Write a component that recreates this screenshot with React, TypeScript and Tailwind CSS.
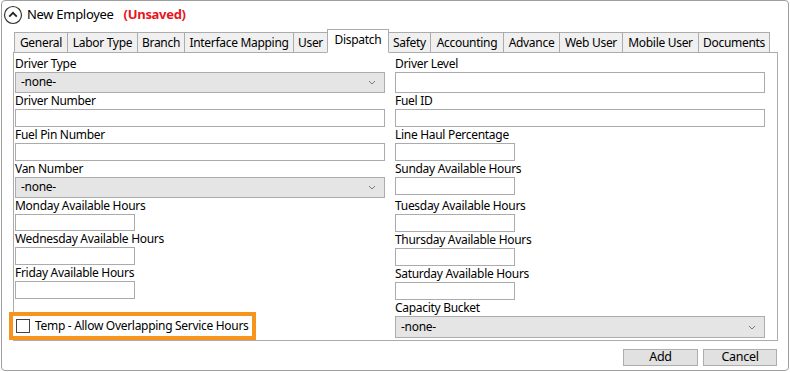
import React from "react";

const tabs: { name: string; w: string }[] = [
  { name: "General", w: "w-[54px]" },
  { name: "Labor Type", w: "w-[71px]" },
  { name: "Branch", w: "w-[48px]" },
  { name: "Interface Mapping", w: "w-[110px]" },
  { name: "User", w: "w-[35px]" },
  { name: "Dispatch", w: "w-[62px]" },
  { name: "Safety", w: "w-[43px]" },
  { name: "Accounting", w: "w-[74px]" },
  { name: "Advance", w: "w-[57px]" },
  { name: "Web User", w: "w-[64px]" },
  { name: "Mobile User", w: "w-[77px]" },
  { name: "Documents", w: "w-[72px]" },
];

function Label({ children, className = "" }: { children: React.ReactNode; className?: string }) {
  return <div className={`h-[16px] leading-[16px] whitespace-nowrap ${className}`}>{children}</div>;
}

function TextBox({ wide, tall }: { wide?: boolean; tall?: boolean }) {
  return (
    <div
      className={`${wide ? "w-[370px]" : "w-[120px]"} ${tall ? "h-[21px]" : "h-[18px]"} border border-[#ababab] bg-white`}
    />
  );
}

function Select({ h = "h-[21px]" }: { h?: string }) {
  return (
    <div className={`w-[370px] ${h} border border-[#acacac] bg-[#e5e5e5] flex items-center justify-between pl-[5px] pr-[8px]`}>
      <span>-none-</span>
      <svg width="8" height="5" viewBox="0 0 8 5" className="text-[#7a7a7a]">
        <path d="M1 1 L4 4 L7 1" fill="none" stroke="currentColor" strokeWidth="1" />
      </svg>
    </div>
  );
}

export default function App() {
  return (
    <div className="w-[790px] h-[372px] bg-white text-[12px] tracking-[-0.3px] text-black font-['Noto_Sans',sans-serif]">
      <div className="ml-px w-[788px] h-[371px] border border-[#9f9f9f] rounded-[4px] flex flex-col">
        {/* header */}
        <div className="h-[28px] flex items-center">
          <svg width="20" height="20" viewBox="0 0 20 20" className="ml-[1px] shrink-0">
            <circle cx="10" cy="10" r="8.5" fill="none" stroke="#333" strokeWidth="1.2" />
            <path d="M6.2 11.6 L10 7.8 L13.8 11.6" fill="none" stroke="#222" strokeWidth="1.8" />
          </svg>
          <span className="ml-[4px] text-[13px]">New Employee</span>
          <span className="ml-[10px] text-[13px] font-bold text-[#e8141c]">(Unsaved)</span>
        </div>

        {/* tabs */}
        <div className="ml-[13px] h-[24px] flex items-end">
          {tabs.map((t) => {
            const active = t.name === "Dispatch";
            return (
              <div
                key={t.name}
                className={`${t.w} -ml-px flex items-center justify-center whitespace-nowrap border border-[#acacac] ${
                  active
                    ? "h-[24px] bg-white border-b-white relative z-10 pb-[2px]"
                    : "h-[21px] bg-[#f0f0f0]"
                }`}
              >
                {t.name}
              </div>
            );
          })}
        </div>

        {/* panel */}
        <div className="-mt-px ml-[11px] w-[765px] h-[289px] border border-[#acacac] pl-[1px] pt-[3px] flex gap-[10px]">
          <div className="w-[370px] flex flex-col">
            <Label>Driver Type</Label>
            <Select />
            <Label>Driver Number</Label>
            <TextBox wide />
            <Label>Fuel Pin Number</Label>
            <TextBox wide />
            <Label>Van Number</Label>
            <Select />
            <Label>Monday Available Hours</Label>
            <TextBox />
            <Label>Wednesday Available Hours</Label>
            <TextBox />
            <Label>Friday Available Hours</Label>
            <TextBox />
            <div className="relative z-10 mt-[13px] -ml-[6px] w-[247px] h-[28px] border-[4px] border-[#f7941d] bg-white flex items-center pl-[3px]">
              <div className="shrink-0 w-[14px] h-[14px] border border-[#444] bg-white" />
              <span className="ml-[5px] text-[12px] whitespace-nowrap">Temp - Allow Overlapping Service Hours</span>
            </div>
          </div>
          <div className="w-[370px] flex flex-col">
            <Label>Driver Level</Label>
            <TextBox wide tall />
            <Label>Fuel ID</Label>
            <TextBox wide />
            <Label>Line Haul Percentage</Label>
            <TextBox />
            <Label>Sunday Available Hours</Label>
            <TextBox />
            <Label className="mt-[3px]">Tuesday Available Hours</Label>
            <TextBox />
            <Label>Thursday Available Hours</Label>
            <TextBox />
            <Label>Saturday Available Hours</Label>
            <TextBox />
            <Label>Capacity Bucket</Label>
            <Select h="h-[22px]" />
          </div>
        </div>

        {/* buttons */}
        <div className="mt-[8px] mr-[11px] flex justify-end gap-[5px]">
          <button className="w-[75px] h-[17px] border border-[#adadad] bg-[#e1e1e1] leading-none text-[12.5px]">Add</button>
          <button className="w-[74px] h-[17px] border border-[#adadad] bg-[#e1e1e1] leading-none text-[12.5px]">Cancel</button>
        </div>
      </div>
    </div>
  );
}
